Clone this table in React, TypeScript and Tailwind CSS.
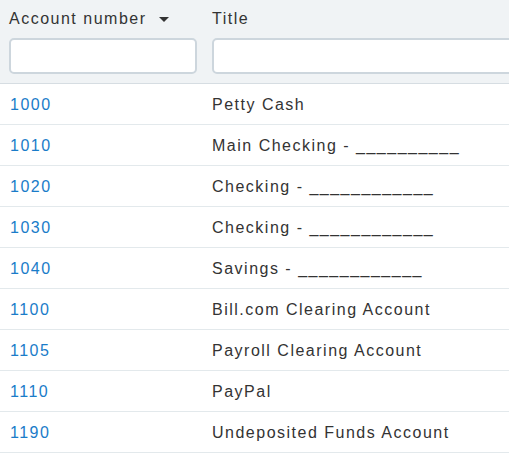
const rows = [
  ["1000", "Petty Cash"],
  ["1010", "Main Checking - __________"],
  ["1020", "Checking - ____________"],
  ["1030", "Checking - ____________"],
  ["1040", "Savings - ____________"],
  ["1100", "Bill.com Clearing Account"],
  ["1105", "Payroll Clearing Account"],
  ["1110", "PayPal"],
  ["1190", "Undeposited Funds Account"],
];

export default function App() {
  return (
    <div className="w-[509px] h-[453px] overflow-hidden bg-white font-['Liberation_Sans',Arial,sans-serif] text-[#333]">
      {/* Header with filters */}
      <div className="h-[84px] bg-[#f0f3f5] border-b border-[#d6dde2] flex">
        <div className="w-[212px] shrink-0 pl-[9px] pt-[7px]">
          <div className="flex items-center h-[24px] text-[16px] tracking-[1.5px]">
            Account number
            <svg width="10" height="5" viewBox="0 0 10 5" className="ml-[12px]">
              <path d="M0 0h10L5 5z" fill="#333" />
            </svg>
          </div>
          <input className="mt-[7px] w-[188px] h-[36px] bg-white border-2 border-[#cdd6dd] rounded-[5px] outline-none" />
        </div>
        <div className="flex-1 pt-[7px]">
          <div className="flex items-center h-[24px] text-[16px] tracking-[1.5px]">Title</div>
          <input className="mt-[7px] w-[320px] h-[36px] bg-white border-2 border-[#cdd6dd] rounded-[5px] outline-none" />
        </div>
      </div>

      {/* Rows */}
      {rows.map(([num, title]) => (
        <div key={num} className="flex items-center h-[41px] pt-[1px] border-b border-[#e3e9ec] text-[16px] tracking-[1.5px]">
          <a className="w-[212px] shrink-0 pl-[10px] text-[#1a7cc9] cursor-pointer">{num}</a>
          <span>{title}</span>
        </div>
      ))}
    </div>
  );
}
